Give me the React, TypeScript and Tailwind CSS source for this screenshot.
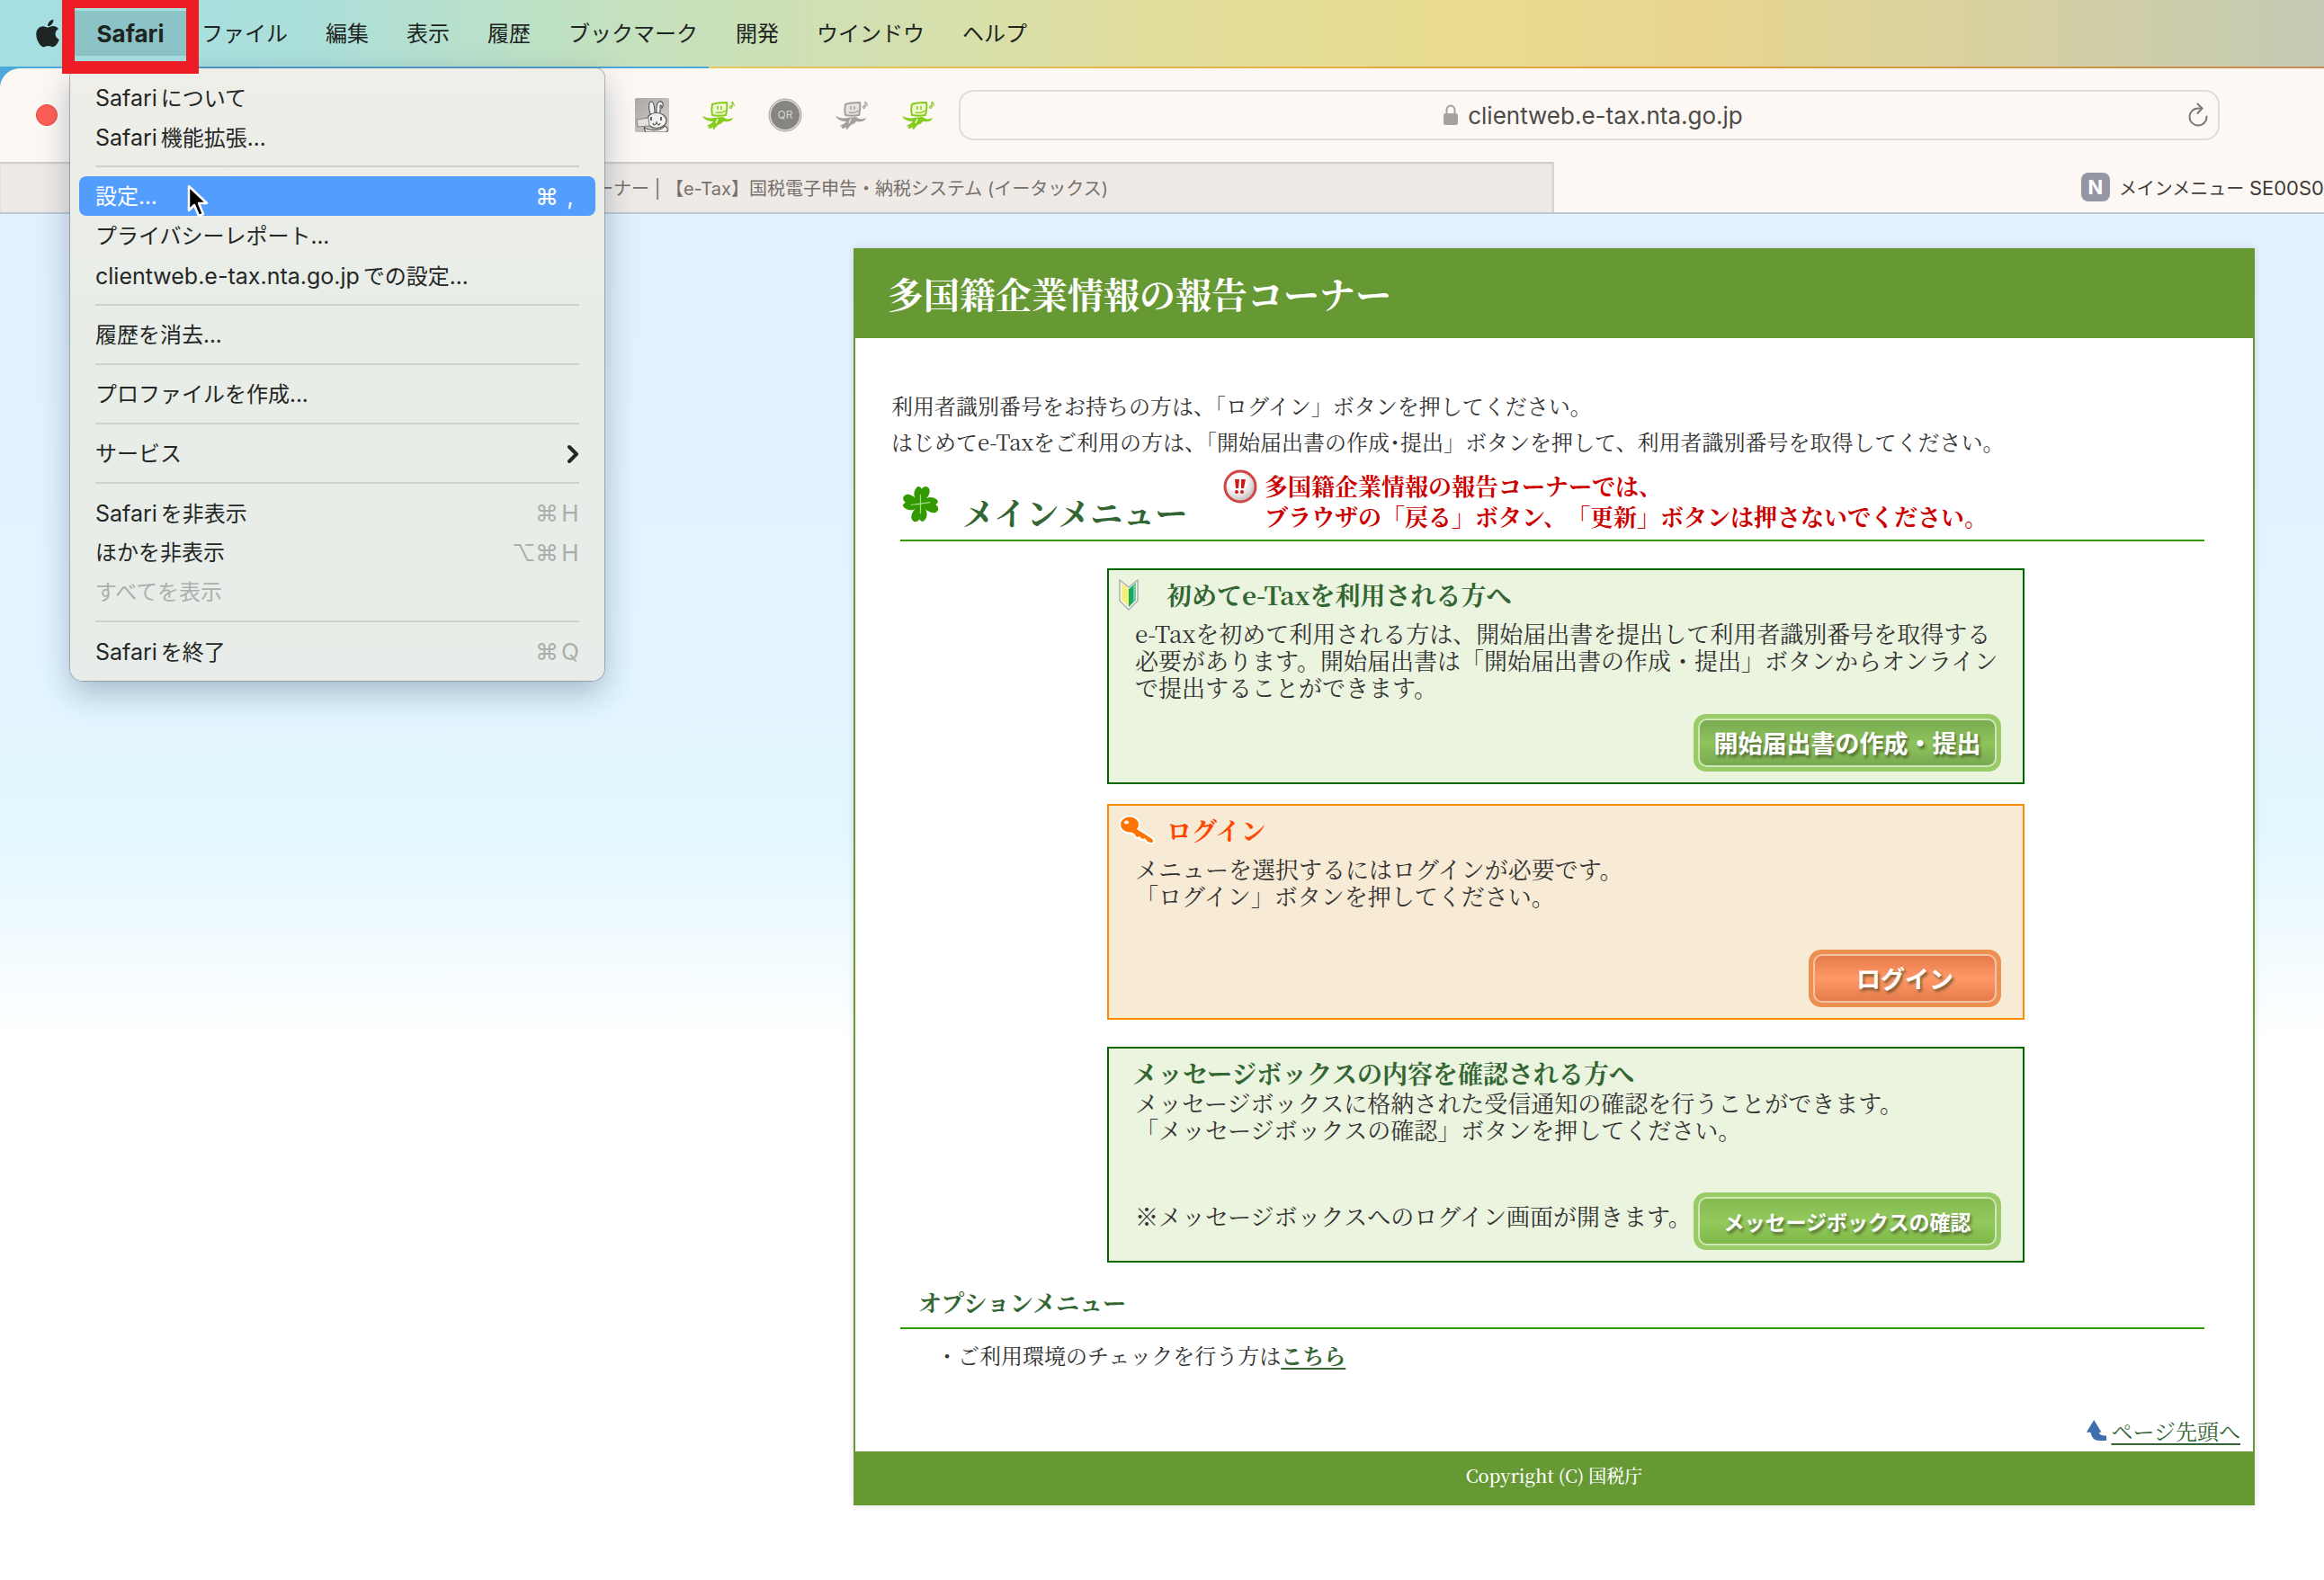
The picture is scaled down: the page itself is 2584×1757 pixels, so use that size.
import React from 'react';
import { FaApple } from 'react-icons/fa';
import { ChevronRight } from 'lucide-react';
import clsx from 'clsx';

const menuBarItems = ['ファイル', '編集', '表示', '履歴', 'ブックマーク', '開発', 'ウインドウ', 'ヘルプ'];

interface MenuEntry {
  latin?: string;
  label: string;
  shortcut?: string[];
  active?: boolean;
  disabled?: boolean;
  submenu?: boolean;
}

const menuGroups: MenuEntry[][] = [
  [
    { latin: 'Safari', label: 'について' },
    { latin: 'Safari', label: '機能拡張...' },
  ],
  [
    { label: '設定...', shortcut: ['⌘', ','], active: true },
    { label: 'プライバシーレポート...' },
    { latin: 'clientweb.e-tax.nta.go.jp', label: 'での設定...' },
  ],
  [{ label: '履歴を消去...' }],
  [{ label: 'プロファイルを作成...' }],
  [{ label: 'サービス', submenu: true }],
  [
    { latin: 'Safari', label: 'を非表示', shortcut: ['⌘', 'H'] },
    { label: 'ほかを非表示', shortcut: ['⌥', '⌘', 'H'] },
    { label: 'すべてを表示', disabled: true },
  ],
  [{ latin: 'Safari', label: 'を終了', shortcut: ['⌘', 'Q'] }],
];

const SafariMenu: React.FC = () => (
  <div
    role="menu"
    className="absolute left-[78px] top-[76px] z-20 w-[594px] rounded-b-[14px] rounded-t-[10px] bg-linear-to-b from-[#efeee8] via-[#e8ede8] via-45% to-[#e8ede9] px-[10px] pb-[11px] pt-[10px] shadow-[0_0_0_1px_rgba(90,105,115,0.45),0_14px_36px_rgba(30,60,90,0.32)]"
  >
    {menuGroups.map((group, i) => (
      <div key={i} className={clsx(i > 0 && 'mt-[10px]')}>
        {i > 0 && <hr className="mx-[18px] mb-[10px] border-t-2 border-[#cdd2cd]" />}
        {group.map((entry) => (
          <button
            key={entry.label}
            role="menuitem"
            disabled={entry.disabled}
            className={clsx(
              'flex h-11 w-full items-center justify-between whitespace-nowrap rounded-lg px-[18px] pt-[2px] text-left text-[24px] leading-[42px]',
              entry.active ? 'bg-[#539dff] text-white' : entry.disabled ? 'text-[#abb0ac]' : 'text-[#242725]'
            )}
          >
            <span>
              {entry.latin && <span className="mr-1 text-[25px]">{entry.latin}</span>}
              {entry.label}
            </span>
            {entry.shortcut && (
              <span className={clsx('-mr-[3px] flex text-[26px]', entry.active ? 'text-white' : 'text-[#abb0ac]')}>
                {entry.shortcut.map((key) => (
                  <span key={key} className="w-[26px] text-center">
                    {key}
                  </span>
                ))}
              </span>
            )}
            {entry.submenu && <ChevronRight className="-mr-[9px] size-8" strokeWidth={3} />}
          </button>
        ))}
      </div>
    ))}
  </div>
);

const Dino: React.FC<{ color: string; face: string }> = ({ color, face }) => (
  <svg viewBox="0 0 38 38" className="size-[38px]" fill="none">
    <path
      d="M1 20c4 2 9 3 13 2l10-1c3 3 7 3 11 1-1 4-6 5-11 4-1 2-3 3-6 4-1 2-3 3-4 5-2 0-1-2-1-3-1 1-3 2-5 2-1-1 0-2 1-2-1-1-3 0-3-1 3-2 5-2 7-5-5 0-10-2-12-6z"
      fill={color}
    />
    <path d="M12 7c5-2 11-2 16-2 1 5 0 10-1 14-5 1-10 1-15 0-1-4-1-8 0-12z" fill={face} stroke={color} strokeWidth="2" />
    <path d="M18 9v4M22 9v4M16 16c4 1 8 0 11-2" stroke={color} strokeWidth="1.500" />
    <path d="M18 23l-2 5" stroke={face} strokeWidth="1.500" />
    <path d="M34 9V4c1 2 3 2 2 5M34 9c-2-1-3 1-2 2s2 0 2-2z" stroke={color} strokeWidth="1.200" />
  </svg>
);

const Rabbit: React.FC = () => (
  <svg viewBox="0 0 38 38" className="size-[38px]" fill="#f1f0ef" stroke="#565452" strokeWidth="1.1">
    <defs>
      <linearGradient id="rabbit-bg" x1="0" y1="0" x2="1" y2="1">
        <stop offset="0" stopColor="#aaa8a6" />
        <stop offset="1" stopColor="#d4d2d0" />
      </linearGradient>
    </defs>
    <rect width="38" height="38" rx="2" fill="url(#rabbit-bg)" stroke="none" />
    <path d="M10 32c4 5 20 5 23-1 4 2 4 5 2 7H12c-1-2-2-4-2-6z" />
    <path d="M17 18C15 12 15 4 18 4s4 6 4 14z" />
    <path d="M24 17c0-4-1-12 3-13 5-1 5 5 3 7 0-3-2-4-2-2 1 4 0 6-1 9z" />
    <ellipse cx="24" cy="25" rx="11" ry="8.500" />
    <path d="M18 21v4M29 21v4" strokeWidth="1.8" />
    <path d="M20 28c1 3 3 2 4-1 1 3 3 4 4 1" fill="none" />
    <path d="M2 24l13-2 1 9-13 1z" fill="#e2e0de" stroke="#8a8886" />
  </svg>
);

const QrBadge: React.FC = () => (
  <svg viewBox="0 0 38 38" className="size-[38px]">
    <circle cx="19" cy="19" r="18" fill="#d8d6d2" stroke="#a5a39f" strokeWidth="1" />
    <circle cx="19" cy="19" r="16" fill="#868580" />
    <text x="19" y="23" textAnchor="middle" fontSize="12" fill="#d6d5d2" fontFamily="Inter, sans-serif">
      QR
    </text>
  </svg>
);

const Toolbar: React.FC = () => (
  <div className="flex h-[104px] items-center rounded-tl-[22px] bg-[#fdf8f4]">
    <button aria-label="閉じる" className="ml-10 size-6 rounded-full border border-[#e0443e] bg-[#fe5f57]" />
    <div className="ml-[642px] flex shrink-0 gap-9">
      <Rabbit />
      <Dino color="#86cc1e" face="#f1fbd2" />
      <QrBadge />
      <Dino color="#a3a19e" face="#e6e4e2" />
      <Dino color="#86cc1e" face="#f1fbd2" />
    </div>
    <div className="ml-[26px] mr-[116px] flex h-14 min-w-0 flex-1 items-center rounded-2xl border-2 border-[#e0dbd8] px-[10px]">
      <div className="flex flex-1 items-center justify-center gap-[10px] pl-8">
        <svg viewBox="0 0 18 24" className="h-6 w-[18px]">
          <path d="M4.500 11V6.500a4.500 5 0 0 1 9 0V11" fill="none" stroke="#a5a19e" strokeWidth="2" />
          <rect x="1" y="10" width="16" height="13" rx="2.500" fill="#a5a19e" />
        </svg>
        <span className="pt-[2px] text-[26px] leading-8 text-[#4b4a48]">clientweb.e-tax.nta.go.jp</span>
      </div>
      <button aria-label="再読み込み">
        <svg viewBox="0 0 24 28" className="h-7 w-6" fill="none" stroke="#7c7976" strokeWidth="2" strokeLinecap="round">
          <path d="M21.500 15.500A9.500 9.500 0 1 1 12 6.500h4" />
          <path d="M11.500 1.500l5 5-5 5.500" />
        </svg>
      </button>
    </div>
  </div>
);

const TabBar: React.FC = () => (
  <div role="tablist" className="flex h-[58px] border-b-2 border-[#bccad6] bg-[#fdf8f4] text-[20px]">
    <button
      role="tab"
      className="flex w-[1728px] shrink-0 items-center justify-center whitespace-nowrap border-r-2 border-[#d9d4d0] bg-[#efeae6] pr-[52px] pt-[3px] text-[#76706c] shadow-[inset_0_2px_2px_#cfc9c5]"
    >
      多国籍企業情報の報告コーナー | 【e-Tax】国税電子申告・納税システム (イータックス)
    </button>
    <button
      role="tab"
      aria-selected
      className="flex flex-1 items-center justify-end gap-[10px] whitespace-nowrap text-[#3f3c3a]"
    >
      <span className="flex size-8 items-center justify-center rounded-lg bg-[#9596a3] text-[22px] font-bold text-white">N</span>
      <span className="pt-[2px]">
        メインメニュー <span className="text-[22px]">SE00S0</span>
      </span>
    </button>
  </div>
);

const ImageButton: React.FC<{ tone: 'green' | 'lime' | 'orange'; className: string; children: React.ReactNode }> = ({
  tone,
  className,
  children,
}) => (
  <button
    className={clsx(
      'h-16 shrink-0 rounded-[14px] p-[5px] font-["Noto_Sans_CJK_JP",sans-serif] font-bold text-white',
      tone === 'orange' ? 'bg-[#ec9152]' : 'bg-[#99cc66]',
      className
    )}
  >
    <span
      className={clsx(
        'flex h-full items-center justify-center whitespace-nowrap rounded-[10px] border-2 [text-shadow:2px_3px_3px_rgba(50,60,30,0.6)]',
        tone === 'green' && 'border-[#cfe7b7] bg-linear-to-b from-[#78aa50] via-[#8fc45c] to-[#78aa50]',
        tone === 'lime' && 'border-[#cfe7b7] bg-linear-to-b from-[#84ba50] via-[#93c95d] to-[#80b848]',
        tone === 'orange' && 'border-[#f3c3a2] bg-linear-to-b from-[#e67a4c] via-[#ff9966] to-[#e67a4c]'
      )}
    >
      {children}
    </span>
  </button>
);

const BeginnerMark: React.FC = () => (
  <svg viewBox="0 0 24 36" className="h-9 w-6">
    <path d="M2 2l10 8L22 2v23L12 35 2 25z" fill="#fff" stroke="#a9aeb0" strokeWidth="1.5" strokeLinejoin="round" />
    <path d="M4 5l8 7v20l-8-8z" fill="#f4f07a" />
    <path d="M20 5l-8 7v20l8-8z" fill="#18a85c" />
    <path d="M20 5l-3 3v18l3-3z" fill="#6fcf9c" />
  </svg>
);

const KeyIcon: React.FC = () => (
  <svg viewBox="0 0 42 34" className="h-[34px] w-[42px]">
    <g stroke="#fff" strokeWidth="4" strokeLinejoin="round" fill="#ff7300">
      <path d="M18 14l20 13c2 2 1 4-1 4l-4-1-3-4-3 1-3-3-3 1-3-4-4-2z" />
      <ellipse cx="13" cy="11" rx="10" ry="8.500" />
    </g>
    <path d="M18 14l20 13c2 2 1 4-1 4l-4-1-3-4-3 1-3-3-3 1-3-4-4-2z" fill="#ff7300" />
    <ellipse cx="13" cy="11" rx="10" ry="8.500" fill="#ff7300" />
    <ellipse cx="9.500" cy="8.500" rx="2.500" ry="2" fill="#fff" />
  </svg>
);

const leaf = 'M22 23C14 18 13 10 17 5c2-3 5-2 6 1 3-4 7-4 9 0 2 5-3 12-10 17z';

const Clover: React.FC = () => (
  <svg viewBox="0 0 44 46" className="mb-[17px] size-[45px] shrink-0" fill="#339900">
    <path d={leaf} />
    <path d={leaf} transform="rotate(88 22 23)" />
    <path d={leaf} transform="rotate(180 22 23)" />
    <path d={leaf} transform="rotate(272 22 23)" />
    <path d="M22 12v22M11 24l22-3" stroke="#a8dd86" strokeWidth="1.2" />
  </svg>
);

const WarningIcon: React.FC = () => (
  <svg viewBox="0 0 38 38" className="size-[38px]">
    <defs>
      <radialGradient id="warn" cx="0.4" cy="0.35" r="0.7">
        <stop offset="0.4" stopColor="#fff" />
        <stop offset="1" stopColor="#b9b4b4" />
      </radialGradient>
    </defs>
    <circle cx="19" cy="19" r="17" fill="url(#warn)" stroke="#d04545" strokeWidth="3" />
    <path d="M13 11h5l-1 10h-3zM20 11h5l-2 10h-3z" fill="#d01818" />
    <circle cx="15" cy="25" r="2" fill="#d01818" />
    <circle cx="21" cy="25" r="2" fill="#d01818" />
  </svg>
);

interface PanelProps {
  title: string;
  icon?: React.ReactNode;
  orange?: boolean;
  tight?: boolean;
  className?: string;
  footer: React.ReactNode;
  children: React.ReactNode;
}

const Panel: React.FC<PanelProps> = ({ title, icon, orange, tight, className, footer, children }) => (
  <section
    className={clsx(
      'ml-[280px] flex h-60 w-[1020px] flex-col border-2 pb-3 pr-6 pt-[9px]',
      orange ? 'border-[#ff8c00] bg-[#f8ebd6]' : 'border-[#006600] bg-[#ebf4df]',
      className
    )}
  >
    <h3
      className={clsx(
        'flex items-center text-[28px] font-bold leading-9',
        orange ? 'text-[#ff4500]' : 'text-[#336633]',
        tight ? 'pl-[26px]' : 'pl-[10px]'
      )}
    >
      {icon && <span className="w-[54px]">{icon}</span>}
      {title}
    </h3>
    <p className={clsx('whitespace-nowrap pl-[29px] text-[26px] leading-[30px]', !tight && 'mt-[10px]')}>{children}</p>
    <div className="mt-auto flex items-center justify-end">{footer}</div>
  </section>
);

const ReportCorner: React.FC = () => (
  <main className='flex-1 bg-linear-to-b from-[#e3f0fd] via-[#e3f7ff] via-45% to-white to-[920px] pb-[83px] pl-[949px] pr-[77px] pt-[38px] font-["Noto_Serif_CJK_JP","Liberation_Serif","Noto_Sans_CJK_JP",serif] text-[#333333]'>
    <div className="border-x-2 border-[#669933] bg-white shadow-[0_0_8px_rgba(0,0,0,0.12)]">
      <header className="flex h-[100px] items-center bg-[#669933] pl-9">
        <h1 className="text-[40px] font-bold leading-[48px] text-white">多国籍企業情報の報告コーナー</h1>
      </header>

      <div className="whitespace-nowrap pl-10 pt-[55px] text-[24px] leading-10">
        <p>利用者識別番号をお持ちの方は、「ログイン」ボタンを押してください。</p>
        <p>はじめてe-Taxをご利用の方は、「開始届出書の作成･提出」ボタンを押して、利用者識別番号を取得してください。</p>
      </div>

      <div className="ml-[50px] mr-[54px] mt-[11px] flex h-20 items-end whitespace-nowrap border-b-2 border-[#339900]">
        <Clover />
        <h2 className="mb-3 ml-6 w-[290px] text-[36px] font-bold leading-9 text-[#336633]">メインメニュー</h2>
        <div className="flex gap-2">
          <WarningIcon />
          <p className="mb-[9px] mt-[1px] text-[26px] font-bold leading-[34px] text-[#cc0000] [text-spacing-trim:space-all]">
            多国籍企業情報の報告コーナーでは、
            <br />
            ブラウザの「戻る」ボタン、「更新」ボタンは押さないでください。
          </p>
        </div>
      </div>

      <Panel
        title="初めてe-Taxを利用される方へ"
        icon={<BeginnerMark />}
        className="mt-[30px]"
        footer={
          <ImageButton tone="green" className="w-[342px] text-[27px]">
            開始届出書の作成・提出
          </ImageButton>
        }
      >
        e-Taxを初めて利用される方は、開始届出書を提出して利用者識別番号を取得する
        <br />
        必要があります。開始届出書は「開始届出書の作成・提出」ボタンからオンライン
        <br />
        で提出することができます。
      </Panel>

      <Panel
        title="ログイン"
        icon={<KeyIcon />}
        orange
        className="mt-[22px]"
        footer={
          <ImageButton tone="orange" className="w-[214px] text-[27px]">
            ログイン
          </ImageButton>
        }
      >
        メニューを選択するにはログインが必要です。
        <br />
        「ログイン」ボタンを押してください。
      </Panel>

      <Panel
        title="メッセージボックスの内容を確認される方へ"
        tight
        className="mt-[30px]"
        footer={
          <>
            <p className="mb-3 min-w-0 flex-1 whitespace-nowrap pl-[29px] text-[26px] leading-[30px]">
              ※メッセージボックスへのログイン画面が開きます。
            </p>
            <ImageButton tone="lime" className="w-[342px] text-[23px]">
              メッセージボックスの確認
            </ImageButton>
          </>
        }
      >
        メッセージボックスに格納された受信通知の確認を行うことができます。
        <br />
        「メッセージボックスの確認」ボタンを押してください。
      </Panel>

      <h2 className="ml-[50px] mr-[54px] mt-[26px] border-b-2 border-[#339900] pb-[10px] pl-5 text-[26px] font-bold leading-9 text-[#336633]">
        オプションメニュー
      </h2>
      <p className="mt-[13px] pl-[90px] text-[24px] leading-8">
        ・ご利用環境のチェックを行う方は
        <a href="#check" className="font-bold text-[#336633] underline decoration-2 underline-offset-4">
          こちら
        </a>
      </p>
      <div className="mt-[56px] flex justify-end gap-1 pb-[11px] pr-[14px]">
        <svg viewBox="0 0 24 26" className="h-6 w-6" fill="#3f6fae">
          <path d="M9 0l9 15h-3c1 3 3 4 9 4v6h-9C9 25 6 21 5 15H0z" />
        </svg>
        <a href="#top" className="text-[24px] leading-6 text-[#336633] underline decoration-2 underline-offset-4">
          ページ先頭へ
        </a>
      </div>
      <footer className="flex h-[60px] items-center justify-center bg-[#669933] pb-[6px] text-[20px] font-medium text-white">
        Copyright (C) 国税庁
      </footer>
    </div>
  </main>
);

export default function App() {
  return (
    <div className='relative flex min-h-screen flex-col overflow-hidden bg-white font-[Inter,"Noto_Sans_CJK_JP","DejaVu_Sans",sans-serif]'>
      <nav className="flex h-[74px] items-center bg-[linear-gradient(to_right,#a5dfe2_0%,#abdfdb_13%,#c3e1bf_26%,#d3e0b0_38%,#e2de9d_50%,#e9dc90_62%,#e8d68f_73%,#c4cab4_100%)] pl-10 text-[24px] text-[#1d2422]">
        <FaApple className="h-9 w-[26px]" />
        <button className="ml-[17px] h-[50px] w-[124px] bg-[#8bc3c6] text-[26px] font-bold">Safari</button>
        <div className="ml-[17px] flex gap-[42px] pt-[1px]">
          {menuBarItems.map((item) => (
            <button key={item}>{item}</button>
          ))}
        </div>
      </nav>

      <div className="bg-[linear-gradient(to_right,#4da9dc_30.5%,#e3c860_30.5%,#e3a238_70%,#c98a55_100%)] pt-[2px]">
        <Toolbar />
      </div>
      <TabBar />
      <ReportCorner />

      <SafariMenu />
      <div className="absolute left-[69px] top-0 z-30 h-[82px] w-[152px] border-x-14 border-b-14 border-t-9 border-[#ed1c24]" />
      <svg viewBox="0 0 26 38" className="absolute left-[208px] top-[205px] z-30 h-[38px] w-[26px]">
        <path d="M2 2v27l6-6 5 12 5-2-5-12h9z" fill="#000" stroke="#fff" strokeWidth="2.500" strokeLinejoin="round" />
      </svg>
    </div>
  );
}
